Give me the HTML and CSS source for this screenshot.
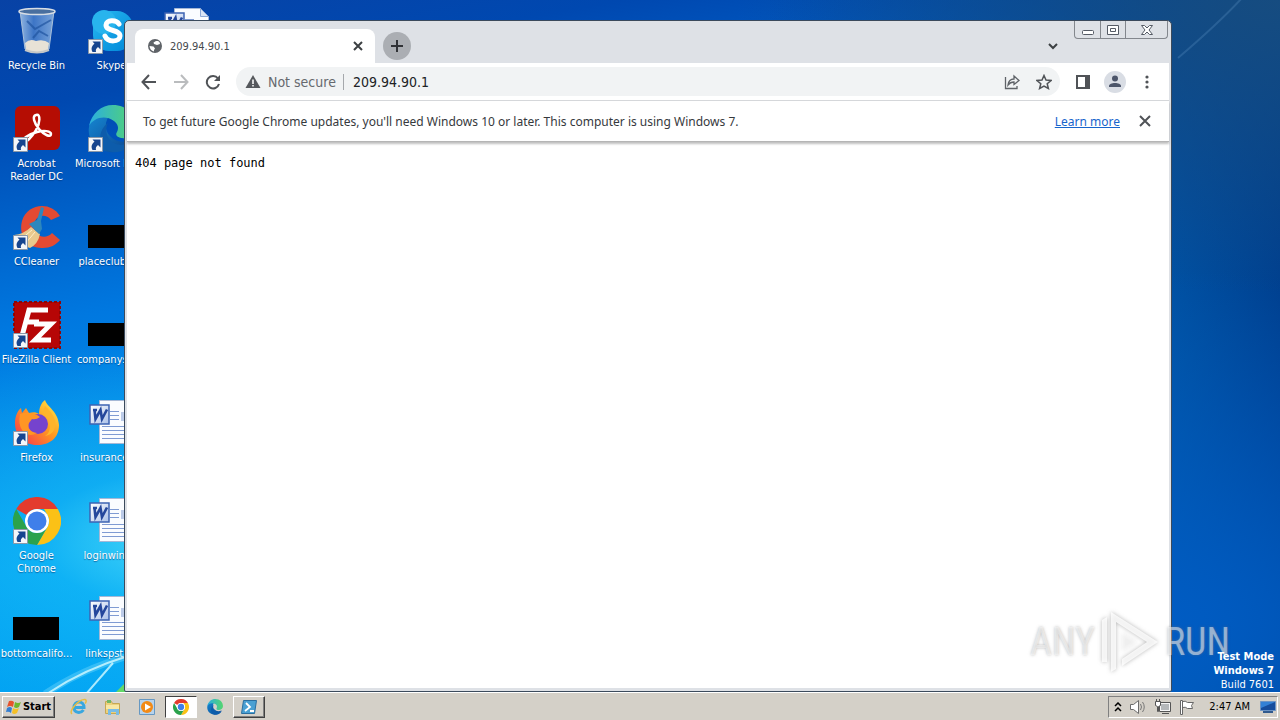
FILE: index.html
```html
<!DOCTYPE html>
<html lang="en">
<head>
    <meta charset="UTF-8">
    <meta name="viewport" content="width=device-width, initial-scale=1.0">
    <title>209.94.90.1</title>
    <link rel="stylesheet" href="styles.css">
</head>
<body>
    <!-- shared icons -->
    <svg class="sprite" aria-hidden="true">
        <defs>
            <linearGradient id="skyBlue" x1="0" y1="0" x2="1" y2="1">
                <stop offset="0" stop-color="#28b8f0"/><stop offset="1" stop-color="#0087d8"/>
            </linearGradient>
            <linearGradient id="edgeTop" x1="0" y1="0" x2="1" y2="0">
                <stop offset="0" stop-color="#2baee0"/><stop offset="1" stop-color="#55d56e"/>
            </linearGradient>
            <linearGradient id="edgeLow" x1="0" y1="0" x2="1" y2="1">
                <stop offset="0" stop-color="#1689d4"/><stop offset="1" stop-color="#0b4590"/>
            </linearGradient>
            <linearGradient id="fire" x1="1" y1="0" x2="0" y2="1">
                <stop offset="0" stop-color="#fff04a"/><stop offset=".45" stop-color="#ff9a20"/><stop offset="1" stop-color="#f52a55"/>
            </linearGradient>
            <linearGradient id="glass" x1="0" y1="0" x2="1" y2="0">
                <stop offset="0" stop-color="#a9c9ea"/><stop offset=".4" stop-color="#477ecb"/><stop offset="1" stop-color="#8db4e2"/>
            </linearGradient>
            <linearGradient id="wordBlue" x1="0" y1="0" x2="1" y2="1">
                <stop offset="0" stop-color="#ffffff"/><stop offset="1" stop-color="#a9c0e8"/>
            </linearGradient>
        </defs>
        <symbol id="shortcut" viewBox="0 0 15 15">
            <path fill="#f4f6f9" stroke="#8b98a8" d="M.5.5h14v14H.5z"/>
            <path fill="#16458f" d="M4.500 2.500h8v8L10 8c-2 1.500-2.500 3-2 5H4.500C2.700 9.500 3.700 7 6.500 4.700z"/>
        </symbol>
        <symbol id="chrome" viewBox="0 0 48 48">
            <path fill="#e33b2e" d="M3.200 12A24 24 0 0 1 44.800 12H24a12 12 0 0 0-10.400 6z"/>
            <path fill="#fbc116" d="M44.800 12A24 24 0 0 1 24 48l10.400-18A12 12 0 0 0 34.400 18L31 12z"/>
            <path fill="#2ba24c" d="M24 48A24 24 0 0 1 3.200 12l10.400 18A12 12 0 0 0 34.400 30z"/>
            <circle cx="24" cy="24" r="12" fill="#fff"/>
            <circle cx="24" cy="24" r="9.500" fill="#3f7fea"/>
        </symbol>
        <symbol id="edge" viewBox="0 0 48 48">
            <path fill="url(#edgeLow)" d="M1 22C3 10 12 5 24 8c-8 7-8 17-2 23 6 7 15 7 22 3-5 10-14 14-23 13C7 45-1 34 1 22z"/>
            <path fill="url(#edgeTop)" d="M1 21C4 8 13 0 25 0c14 0 23 10 23 21 0 9-8 13-15 12-4-1-6-3-4-6 2-4 1-8-3-11C17 9 5 13 1 21z"/>
            <path fill="#0d5cab" d="M20 18c-4 8-1 18 8 21 6 2 12 0 17-4-6 12-18 15-26 10-9-6-9-20 1-27z"/>
        </symbol>
        <symbol id="worddoc" viewBox="0 0 48 48">
            <path fill="#fafcff" stroke="#a5b8d6" d="M11.500 1.500h26l8 8v35h-34z"/>
            <path fill="#d9e4f5" stroke="#8da9d6" d="M37.500 1.500v8h8z"/>
            <path stroke="#7f9bd3" d="M22 12.500h9M22 16.500h9M22 20.500h9M14 27.500h27M14 31.500h27M14 35.500h27M14 39.500h27"/>
            <path fill="#bccbe8" d="M33 13h8v9h-8z"/>
            <path fill="url(#wordBlue)" stroke="#3d63b3" stroke-width="1.500" d="M2 6h19v19H2z"/>
            <path fill="none" stroke="#24479c" stroke-width="2.600" d="M5 11h4M6.500 11l1 9 5-9 1.500 9 5-9.500"/>
        </symbol>
    </svg>

    <main class="desktop">
        <svg class="light-beams" viewBox="0 0 1280 692" preserveAspectRatio="none" aria-hidden="true">
            <path fill="none" stroke="#9deaff" stroke-opacity=".3" stroke-width="7" d="M45 694Q80 670 128 656"/>
            <path fill="none" stroke="#d5faff" stroke-opacity=".8" stroke-width="2" d="M47 694Q82 670 128 656M86 694L113 663"/>
            <path fill="#63d968" d="M116 692l9-9v9z"/>
            <path fill="none" stroke="#6aa1cf" stroke-opacity=".25" stroke-width="2" d="M1178 58Q1220 22 1242-2"/>
        </svg>

        <div class="icon-grid">
            <a href="#" class="shortcut">
                <svg class="icon" viewBox="0 0 48 48">
                    <path fill="url(#glass)" fill-opacity=".85" stroke="#a9c0da" d="M7 4l5 38q12 6 24 0l5-38z"/>
                    <path fill="#e8e2d6" d="M12 36q5-5 11-2 8-2 13 2l-1 7q-11 5-22 0z"/>
                    <path fill="none" stroke="#20549f" stroke-width="2" stroke-opacity=".7" d="M14 14l8 8 16-9M20 31l6-7 9 5"/>
                    <ellipse cx="24" cy="4.500" rx="18" ry="3" fill="#496f9f" stroke="#d7dde4" stroke-width="1.500"/>
                    <path fill="none" stroke="#c5c7c7" stroke-width="2" d="M12 43q12 5 24 0"/>
                </svg>
                <span>Recycle Bin</span>
            </a>
            <a href="#" class="shortcut">
                <svg class="icon" viewBox="0 0 48 48">
                    <rect x="5" y="4" width="40" height="40" rx="16" fill="url(#skyBlue)"/>
                    <circle cx="16" cy="15" r="12" fill="#28b4ed"/>
                    <path fill="none" stroke="#fff" stroke-width="5" stroke-linecap="round" d="M31 17c-3-5-13-4-13 1 0 7 14 4 14 11 0 6-12 7-15 0"/>
                    <use href="#shortcut" x="0" y="32" width="15" height="15"/>
                </svg>
                <span>Skype</span>
            </a>
            <a href="#" class="shortcut" aria-label="Document">
                <svg class="icon" viewBox="0 0 48 48"><use href="#worddoc"/></svg>
            </a>

            <a href="#" class="shortcut">
                <svg class="icon" viewBox="0 0 48 48">
                    <rect x="2" y="1" width="45" height="44" rx="6" fill="#b50d03"/>
                    <path fill="none" stroke="#fff" stroke-width="2.500" d="M23 10c5-2 4 9 0 15-4 7-10 13-13 12-3-2 6-8 14-10 7-2 14-1 14 2 0 4-7 1-12-5-5-6-7-13-3-14z"/>
                    <use href="#shortcut" x="0" y="32" width="15" height="15"/>
                </svg>
                <span>Acrobat<br>Reader DC</span>
            </a>
            <a href="#" class="shortcut">
                <svg class="icon" viewBox="0 0 48 48">
                    <use href="#edge"/>
                    <use href="#shortcut" x="0" y="32" width="15" height="15"/>
                </svg>
                <span>Microsoft Edge</span>
            </a>
            <span></span>

            <a href="#" class="shortcut">
                <svg class="icon" viewBox="0 0 48 48">
                    <path fill="#e34a32" d="M47 13C38-2 14 0 9 18c-4 15 6 28 21 27 7 0 13-3 17-8l-8-7c-6 7-18 4-18-7 0-10 11-14 17-6z"/>
                    <path fill="#e9c98d" d="M18 24l9 7q-2 10-10 14Q7 43 1 32q10-1 17-8z"/>
                    <path fill="none" stroke="#fff0c8" d="M19 27L8 36M22 29L12 41"/>
                    <path fill="#2d87bd" d="M16 21l8-4 4-13 3 1-3 13 1 8-3 5z"/>
                    <use href="#shortcut" x="0" y="32" width="15" height="15"/>
                </svg>
                <span>CCleaner</span>
            </a>
            <a href="#" class="shortcut">
                <svg class="icon" viewBox="0 0 48 48"><path d="M0 22h46v23H0z"/></svg>
                <span>placeclub.jpg</span>
            </a>
            <span></span>

            <a href="#" class="shortcut">
                <svg class="icon" viewBox="0 0 48 48">
                    <path fill="#b60606" stroke="#8f0505" stroke-width="2" stroke-dasharray="3 2" d="M1 1h46v46H1z"/>
                    <path fill="none" stroke="#fff" stroke-width="5" d="M35 9H16L9 35M13 21h13M21 23h17L22 39h16"/>
                    <use href="#shortcut" x="0" y="32" width="15" height="15"/>
                </svg>
                <span>FileZilla Client</span>
            </a>
            <a href="#" class="shortcut">
                <svg class="icon" viewBox="0 0 48 48"><path d="M0 22h46v23H0z"/></svg>
                <span>companys.jpg</span>
            </a>
            <span></span>

            <a href="#" class="shortcut">
                <svg class="icon" viewBox="0 0 48 48">
                    <path fill="url(#fire)" d="M2 24C2 17 5 11 8 9l1 5 4-5 3 5c4-1 7-1 10 1 0-6 2-11 6-14 2 7 13 11 14 25 0 13-9 20-22 20S2 37 2 24z"/>
                    <circle cx="25" cy="25" r="10" fill="#7543ce"/>
                    <path fill="#ff9624" d="M7 15q8-3 17 1l3 2q-4 3-8 2l-3 4q-3 8 8 10-9 5-15-3-4-6-2-16z"/>
                    <path fill="#ffb42b" d="M29 13q8 3 8 14 0 7-5 10 12-2 10-16-3-8-10-14z"/>
                    <use href="#shortcut" x="0" y="32" width="15" height="15"/>
                </svg>
                <span>Firefox</span>
            </a>
            <a href="#" class="shortcut">
                <svg class="icon" viewBox="0 0 48 48"><use href="#worddoc"/></svg>
                <span>insurance.rtf</span>
            </a>
            <span></span>

            <a href="#" class="shortcut">
                <svg class="icon" viewBox="0 0 48 48">
                    <use href="#chrome"/>
                    <use href="#shortcut" x="0" y="32" width="15" height="15"/>
                </svg>
                <span>Google<br>Chrome</span>
            </a>
            <a href="#" class="shortcut">
                <svg class="icon" viewBox="0 0 48 48"><use href="#worddoc"/></svg>
                <span>loginwin.rtf</span>
            </a>
            <span></span>

            <a href="#" class="shortcut">
                <svg class="icon" viewBox="0 0 48 48"><path d="M0 22h46v23H0z"/></svg>
                <span>bottomcalifo...</span>
            </a>
            <a href="#" class="shortcut">
                <svg class="icon" viewBox="0 0 48 48"><use href="#worddoc"/></svg>
                <span>linkspst.rtf</span>
            </a>
        </div>

        <section class="window">
            <header class="tab-strip">
                <div class="tab">
                    <svg width="16" height="16" viewBox="0 0 16 16"><circle cx="8" cy="8" r="7" fill="#5f6368"/><path fill="#fff" d="M9 3L6.500 4.500 7 6l3 1 3-1-.5-2L11 3zM2.500 8l4 .5 1.500 2-1 1.500v1.500Q3 12.500 2.500 8z"/></svg>
                    <span class="tab-title">209.94.90.1</span>
                    <button class="tab-close" aria-label="Close tab"><svg width="10" height="10" viewBox="0 0 10 10"><path stroke="#3c4043" stroke-width="2" d="M1 1l8 8M9 1L1 9"/></svg></button>
                </div>
                <button class="new-tab" aria-label="New tab"><svg width="14" height="14" viewBox="0 0 14 14"><path stroke="#303236" stroke-width="2" d="M7 1v12M1 7h12"/></svg></button>
                <button class="tab-search" aria-label="Search tabs"><svg width="12" height="8" viewBox="0 0 12 8"><path fill="none" stroke="#3c4043" stroke-width="2" d="M2 2l4 4 4-4"/></svg></button>
                <div class="window-controls">
                    <button aria-label="Minimize"><svg width="14" height="14" viewBox="0 0 14 14"><rect x="1.500" y="7.500" width="11" height="4" rx="1" fill="#fff" stroke="#555b65"/></svg></button>
                    <button aria-label="Restore"><svg width="14" height="14" viewBox="0 0 14 14"><path fill="#fff" stroke="#555b65" d="M1.500 2.500h11v9h-11zM4.500 5.500h5v3h-5z"/></svg></button>
                    <button class="close" aria-label="Close"><svg width="14" height="14" viewBox="0 0 14 14"><path fill="#fff" stroke="#555b65" d="M1.500 2.500h3L7 5l2.500-2.500h3L9 7l3.500 4.500h-3L7 9l-2.500 2.500h-3L5 7z"/></svg></button>
                </div>
            </header>

            <div class="toolbar">
                <button class="nav" aria-label="Back"><svg width="16" height="16" viewBox="0 0 16 16"><path fill="none" stroke="#505357" stroke-width="2" d="M15 8H2M8 1L1.500 8 8 15"/></svg></button>
                <button class="nav" aria-label="Forward"><svg width="16" height="16" viewBox="0 0 16 16"><path fill="none" stroke="#babcbe" stroke-width="2" d="M1 8h13M8 1l6.500 7L8 15"/></svg></button>
                <button class="nav" aria-label="Reload"><svg width="16" height="16" viewBox="0 0 16 16"><path fill="none" stroke="#505357" stroke-width="2" d="M13 4.500A6.200 6.200 0 1 0 14 10"/><path fill="#505357" d="M15 1v6H9z"/></svg></button>
                <form class="omnibox">
                    <button type="button" class="security">
                        <svg width="16" height="16" viewBox="0 0 16 16"><path fill="#55585c" d="M8 1l7.500 13H.5z"/><path stroke="#fff" stroke-width="1.500" d="M8 5.500V10M8 11v1.500"/></svg>
                        Not secure
                    </button>
                    <input type="text" value="209.94.90.1" aria-label="Address">
                    <button type="button" class="nav" aria-label="Share"><svg width="16" height="16" viewBox="0 0 16 16"><path fill="none" stroke="#5f6368" stroke-width="1.300" d="M1.500 3v11.500H13V12M4 11c.5-4 2.500-6 6-6V2l5 4.500-5 4V8c-3 0-4.500 1-6 3z"/></svg></button>
                    <button type="button" class="nav" aria-label="Bookmark"><svg width="16" height="16" viewBox="0 0 16 16"><path fill="none" stroke="#505357" stroke-width="1.500" d="M8 1.500l2 4.500 5 .5-3.800 3.200 1.200 4.800L8 12l-4.400 2.500 1.200-4.800L1 6.500 6 6z"/></svg></button>
                </form>
                <button class="nav" aria-label="Side panel"><svg width="16" height="16" viewBox="0 0 16 16"><path fill="#505357" d="M1 1h14v14H1z"/><path fill="#fff" d="M3 3h7v10H3z"/></svg></button>
                <button class="nav" aria-label="Profile"><svg width="22" height="22" viewBox="0 0 22 22"><circle cx="11" cy="11" r="11" fill="#d9dde4"/><circle cx="11" cy="7.500" r="3" fill="#4c5569"/><path fill="#4c5569" d="M5 16v-1c0-4 12-4 12 0v1z"/></svg></button>
                <button class="nav" aria-label="Menu"><svg width="16" height="16" viewBox="0 0 16 16" fill="#505357"><circle cx="8" cy="3" r="1.600"/><circle cx="8" cy="8" r="1.600"/><circle cx="8" cy="13" r="1.600"/></svg></button>
            </div>

            <div class="infobar">
                <p>To get future Google Chrome updates, you'll need Windows 10 or later. This computer is using Windows 7.</p>
                <a href="#">Learn more</a>
                <button aria-label="Dismiss"><svg width="12" height="12" viewBox="0 0 12 12"><path stroke="#505357" stroke-width="2" d="M1 1l10 10M11 1L1 11"/></svg></button>
            </div>

            <div class="page"><pre>404 page not found</pre></div>
        </section>

        <div class="watermark">
            <span>ANY</span>
            <svg width="58" height="64" viewBox="0 0 58 64" aria-hidden="true">
                <path d="M1 52V10l5-3v45zM10 62V2l47 30-36 24v-7l25-17-31-20v47z"/>
                <path d="M21 22l15 10-15 10z" fill-opacity=".3"/>
            </svg>
            <span>RUN</span>
        </div>

        <div class="build">
            <strong>Test Mode</strong>
            <strong>Windows 7</strong>
            <span>Build 7601</span>
        </div>
    </main>

    <footer class="taskbar">
        <button class="start">
            <svg width="16" height="16" viewBox="0 0 16 16"><path fill="#e6532b" d="M3 2q3-1 5 1L7 8Q4 6 1 8z"/><path fill="#70b62c" d="M9 3q3 2 6 0l-2 5q-3 2-5 0z"/><path fill="#347fd2" d="M1 9q3-2 5 0l-1 5q-2-2-5-1z"/><path fill="#f5c027" d="M7 9q3 2 6 0l-2 5q-3 2-5 0z"/></svg>
            Start
        </button>
        <nav class="launch">
            <button aria-label="Internet Explorer"><svg width="18" height="18" viewBox="0 0 18 18"><path fill="none" stroke="#38a7df" stroke-width="3" d="M4 9.500h10C14 2 4 2 4 9.500c0 6 7 6 9.500 2.500"/><path fill="none" stroke="#e7bd43" stroke-width="1.500" d="M2 16C-2 13 9 1 15 1.500c2 .5 1 3 0 4"/></svg></button>
            <button aria-label="Explorer"><svg width="18" height="18" viewBox="0 0 18 18"><path fill="#ecd17b" stroke="#c5a754" d="M1.500 3.500h6l1 2h7v10h-14z"/><path fill="#70b864" d="M3 2h4v3H3z"/><path fill="#f8e8a5" d="M2 7h13v4H2z"/><path fill="#79bce5" d="M4 11h11v6h-3v-3H7v3H4z"/></svg></button>
            <button aria-label="Media Player"><svg width="18" height="18" viewBox="0 0 18 18"><path fill="#b7d3ec" stroke="#6698c2" d="M1.500 1.500h15v15h-15z"/><circle cx="9" cy="9" r="6" fill="#f28a16"/><path fill="#fff" d="M7 5.500l6 3.500-6 3.500z"/></svg></button>
            <button class="active" aria-label="Google Chrome"><svg width="16" height="16"><use href="#chrome"/></svg></button>
            <button aria-label="Microsoft Edge"><svg width="16" height="16"><use href="#edge"/></svg></button>
            <button class="running" aria-label="PowerShell"><svg width="18" height="18" viewBox="0 0 18 18"><path fill="#4aa0d3" stroke="#2b6e9f" d="M3.500 2.500h13l-2 13h-13z"/><path fill="none" stroke="#fff" stroke-width="1.800" d="M6 5l4 4-5 4M10 13h4"/></svg></button>
        </nav>
        <div class="tray">
            <button aria-label="Show hidden icons"><svg width="8" height="10" viewBox="0 0 8 10"><path fill="none" stroke="#000" stroke-width="1.500" d="M1 4l3-3 3 3M1 9l3-3 3 3"/></svg></button>
            <button aria-label="Volume"><svg width="18" height="16" viewBox="0 0 18 16"><path fill="#fff" stroke="#6c6c6c" d="M1.500 5.500h3l5-4v13l-5-4h-3z"/><path fill="none" stroke="#777" d="M11.500 5q2 3 0 6M13.500 3q3.500 5 0 10"/></svg></button>
            <button aria-label="Network"><svg width="18" height="16" viewBox="0 0 18 16"><path fill="#f5f5f5" stroke="#555" d="M5.500 3.500h11v9h-11zM8 14.500h7"/><path fill="#b5b8ba" d="M7 5h8v6H7z"/><path fill="#fff" stroke="#555" d="M1.500 2.500h5v4l-2 1v5h-1v-5l-2-1zM2.500 0v3M5.500 0v3"/></svg></button>
            <button aria-label="Action Center"><svg width="16" height="16" viewBox="0 0 16 16"><path fill="#fff" stroke="#666" d="M1.500 1.500h2v14h-2zM3.500 2.500q3-1 5 1h6l-2 3 1 3h-5q-2-2-5-1z"/></svg></button>
            <time>2:47 AM</time>
            <button aria-label="Show desktop"><svg width="16" height="14" viewBox="0 0 16 14"><path fill="#174d9c" stroke="#6d94c4" d="M.5 1.500h15v9H.5z"/><path fill="#3481d5" d="M1 2h14L1 8z"/><path fill="#315a8e" d="M3 11h10v2H3z"/></svg></button>
        </div>
    </footer>
</body>
</html>
```

FILE: styles.css
```css
* {
    box-sizing: border-box;
}
body {
    margin: 0;
    height: 100vh;
    display: flex;
    flex-direction: column;
    overflow: hidden;
    font-family: "DejaVu Sans Condensed", "Noto Sans", sans-serif;
    font-size: 11px;
}
button {
    display: flex;
    align-items: center;
    justify-content: center;
    padding: 0;
    border: 0;
    background: none;
    font: inherit;
    color: inherit;
}
svg {
    display: block;
    flex: none;
}
.sprite {
    position: absolute;
    width: 0;
    height: 0;
}

/* desktop */
.desktop {
    position: relative;
    flex: 1;
    min-height: 0;
    overflow: hidden;
    background:
        radial-gradient(ellipse at 14% 78%, rgba(90, 230, 250, 0.8), rgba(30, 200, 250, 0.5) 9%, transparent 26%),
        radial-gradient(ellipse at 90% 90%, #005cc4, transparent 40%),
        radial-gradient(ellipse at 100% 0%, #164c80, transparent 30%),
        linear-gradient(90deg, transparent 60%, #00408f 100%),
        linear-gradient(170deg, #0842a5 0%, #0048b0 12%, #0078e0 36%, #009bf0 62%, #00a8f5 100%);
}
.light-beams {
    position: absolute;
    width: 100%;
    height: 100%;
}
.icon-grid {
    display: grid;
    grid-template-columns: repeat(3, 75px);
    grid-auto-rows: 98px;
    padding-top: 7px;
}
.shortcut {
    display: flex;
    flex-direction: column;
    align-items: center;
    gap: 4px;
    width: 73px;
    color: #fff;
    line-height: 13px;
    text-align: center;
    text-decoration: none;
    text-shadow: 0 1px 1px rgba(0, 48, 108, 0.6);
    white-space: nowrap;
}
.icon {
    width: 48px;
    height: 48px;
}

/* browser window */
.window {
    position: absolute;
    top: 20px;
    right: 108px;
    bottom: 0;
    left: 124px;
    display: flex;
    flex-direction: column;
    padding: 0 2px 3px;
    border: 1px solid #3b4a5c;
    border-radius: 5px 5px 2px 2px;
    background: #dee1e6;
}
.tab-strip {
    position: relative;
    display: flex;
    align-items: flex-end;
    height: 42px;
    padding-left: 8px;
}
.tab {
    display: flex;
    align-items: center;
    gap: 7px;
    width: 240px;
    height: 34px;
    padding: 0 12px;
    border-radius: 8px 8px 0 0;
    background: #fff;
    color: #45494d;
}
.tab-title {
    flex: 1;
}
.tab-close {
    width: 10px;
    height: 16px;
}
.new-tab {
    width: 28px;
    height: 28px;
    margin: 0 0 3px 8px;
    border-radius: 50%;
    background: #abaeb3;
}
.tab-search {
    width: 28px;
    height: 28px;
    margin: 0 102px 3px auto;
}
.window-controls {
    position: absolute;
    top: 0;
    right: 1px;
    display: flex;
    border: 1px solid #83878d;
    border-top: 0;
    border-radius: 0 0 4px 4px;
}
.window-controls button {
    width: 25px;
    height: 17px;
}
.window-controls button + button {
    border-left: 1px solid #83878d;
}
.window-controls .close {
    width: 42px;
}
.toolbar {
    display: flex;
    align-items: center;
    height: 38px;
    padding: 0 6px;
    border-bottom: 1px solid #d5d7da;
    background: #fff;
}
.nav {
    width: 32px;
    height: 28px;
}
.omnibox {
    flex: 1;
    display: flex;
    align-items: center;
    height: 29px;
    margin: 0 7px;
    padding-left: 9px;
    border-radius: 15px;
    background: #f1f3f4;
    font-size: 14px;
}
.security {
    gap: 7px;
    padding-right: 7px;
    border-right: 1px solid #a5a8ac;
    color: #66696e;
    line-height: 16px;
}
.omnibox input {
    flex: 1;
    min-width: 0;
    padding: 0 9px;
    border: 0;
    background: none;
    font: inherit;
    color: #202124;
    outline: 0;
}
.infobar {
    z-index: 1;
    display: flex;
    align-items: center;
    height: 41px;
    padding: 0 18px 0 16px;
    background: #fff;
    border-bottom: 1px solid #b5b5b5;
    box-shadow: 0 2px 2px rgba(0, 0, 0, 0.25);
    color: #36393d;
    font-family: "Noto Sans", sans-serif;
    font-size: 12px;
}
.infobar p {
    flex: 1;
    margin: 0;
}
.infobar a {
    margin-right: 19px;
    color: #1765cc;
}
.page {
    flex: 1;
    padding: 14px 8px;
    background: #fff;
}
.page pre {
    margin: 0;
    font: 12px/14px "DejaVu Sans Mono", monospace;
    color: #000;
}

/* overlays on the desktop */
.watermark {
    position: absolute;
    right: 50px;
    bottom: 18px;
    display: flex;
    align-items: center;
    gap: 6px;
    color: rgba(255, 255, 255, 0.5);
    font: 38px/64px "Roboto Condensed", "Liberation Sans Narrow", sans-serif;
    text-shadow: 0 0 3px rgba(120, 120, 120, 0.5);
}
.watermark svg {
    fill: rgba(255, 255, 255, 0.8);
    filter: drop-shadow(0 0 2px rgba(80, 80, 80, 0.5));
}
.build {
    position: absolute;
    right: 6px;
    bottom: 0;
    display: flex;
    flex-direction: column;
    color: #fff;
    line-height: 14px;
    text-align: right;
}

/* taskbar */
.taskbar {
    display: flex;
    align-items: center;
    height: 28px;
    padding: 2px;
    border-top: 1px solid #fff;
    background: #d4d0c8;
}
.start,
.launch .running {
    border: 1px solid;
    border-color: #fff #404040 #404040 #fff;
    box-shadow: inset -1px -1px #808080;
}
.start {
    gap: 1px;
    width: 53px;
    height: 22px;
    font-weight: bold;
}
.launch {
    display: flex;
    gap: 2px;
    margin-left: 8px;
}
.launch button {
    width: 32px;
    height: 22px;
}
.launch .active {
    border: 1px solid;
    border-color: #404040 #fff #fff #404040;
    background: #fff;
}
.tray {
    display: flex;
    align-items: center;
    gap: 7px;
    height: 22px;
    margin-left: auto;
    padding: 0 1px 0 5px;
    border: 1px solid;
    border-color: #808080 #fff #fff #808080;
}
.tray time {
    margin: 0 3px 0 7px;
}
```
